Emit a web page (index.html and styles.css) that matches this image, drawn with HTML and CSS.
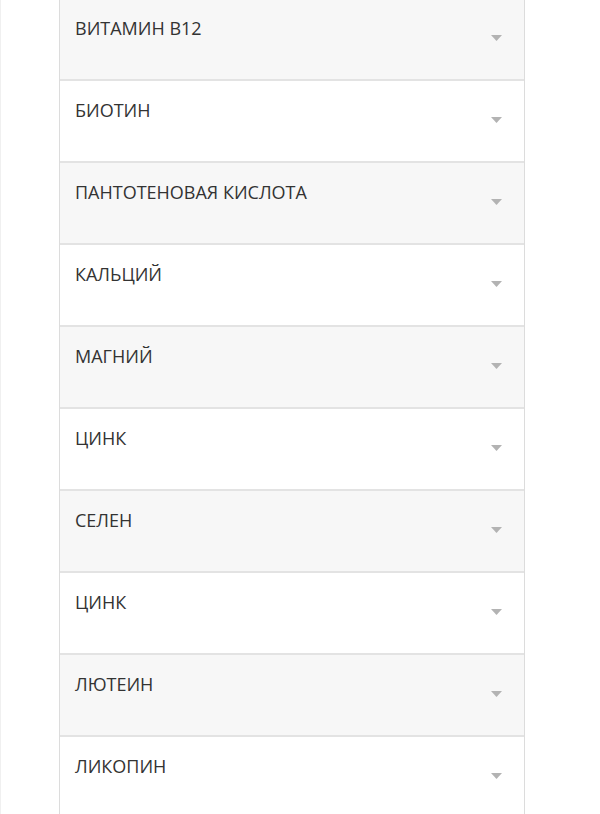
FILE: index.html
```html
<!DOCTYPE html>
<html lang="ru">
<head>
<meta charset="utf-8">
<title>Состав</title>
<link rel="stylesheet" href="styles.css">
</head>
<body>
<div class="page">
  <div class="accordion">
    <div class="row alt"><span class="label">ВИТАМИН B12</span><svg class="arrow" width="11" height="6" viewBox="0 0 11 6"><polygon points="0,0 11,0 5.5,6"/></svg></div>
    <div class="row"><span class="label">БИОТИН</span><svg class="arrow" width="11" height="6" viewBox="0 0 11 6"><polygon points="0,0 11,0 5.5,6"/></svg></div>
    <div class="row alt"><span class="label">ПАНТОТЕНОВАЯ КИСЛОТА</span><svg class="arrow" width="11" height="6" viewBox="0 0 11 6"><polygon points="0,0 11,0 5.5,6"/></svg></div>
    <div class="row"><span class="label">КАЛЬЦИЙ</span><svg class="arrow" width="11" height="6" viewBox="0 0 11 6"><polygon points="0,0 11,0 5.5,6"/></svg></div>
    <div class="row alt"><span class="label">МАГНИЙ</span><svg class="arrow" width="11" height="6" viewBox="0 0 11 6"><polygon points="0,0 11,0 5.5,6"/></svg></div>
    <div class="row"><span class="label">ЦИНК</span><svg class="arrow" width="11" height="6" viewBox="0 0 11 6"><polygon points="0,0 11,0 5.5,6"/></svg></div>
    <div class="row alt"><span class="label">СЕЛЕН</span><svg class="arrow" width="11" height="6" viewBox="0 0 11 6"><polygon points="0,0 11,0 5.5,6"/></svg></div>
    <div class="row"><span class="label">ЦИНК</span><svg class="arrow" width="11" height="6" viewBox="0 0 11 6"><polygon points="0,0 11,0 5.5,6"/></svg></div>
    <div class="row alt"><span class="label">ЛЮТЕИН</span><svg class="arrow" width="11" height="6" viewBox="0 0 11 6"><polygon points="0,0 11,0 5.5,6"/></svg></div>
    <div class="row"><span class="label">ЛИКОПИН</span><svg class="arrow" width="11" height="6" viewBox="0 0 11 6"><polygon points="0,0 11,0 5.5,6"/></svg></div>
  </div>
</div>
</body>
</html>
```

FILE: styles.css
```css
html, body {
  margin: 0;
  padding: 0;
  background: #ffffff;
  overflow: hidden;
}

.page {
  width: 600px;
  height: 814px;
  box-sizing: border-box;
  border-left: 1px solid #f0f0f0;
  overflow: hidden;
}

.accordion {
  margin: -1px 0 0 58px;
  width: 464px;
  border-left: 1px solid #dcdcdc;
  border-right: 1px solid #dcdcdc;
}

.row {
  display: flex;
  justify-content: space-between;
  align-items: flex-start;
  height: 80px;
  box-sizing: content-box;
  padding: 0 22px 0 15px;
  border-bottom: 2px solid #e3e3e3;
  background: #ffffff;
}

.row.alt {
  background: #f7f7f7;
}

.label {
  display: block;
  margin-top: 17px;
  font-family: "Open Sans", "Noto Sans", sans-serif;
  font-size: 18px;
  line-height: 24px;
  color: #333333;
}

.arrow {
  display: block;
  margin-top: 36px;
  fill: #b3b3b3;
}
```
